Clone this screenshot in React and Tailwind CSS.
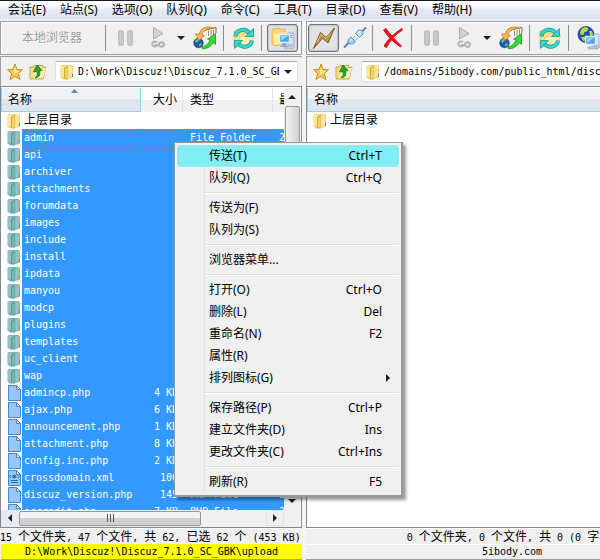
// App.jsx — dual-pane FTP client window with the local file context menu open
import { useState } from "react";

const FOLDERS = [
  "admin", "api", "archiver", "attachments", "forumdata", "images", "include", "install",
  "ipdata", "manyou", "modcp", "plugins", "templates", "uc_client", "wap",
];

const FILES = [
  { name: "admincp.php", size: "4 KB", type: "PHP File" },
  { name: "ajax.php", size: "6 KB", type: "PHP File" },
  { name: "announcement.php", size: "1 KB", type: "PHP File" },
  { name: "attachment.php", size: "8 KB", type: "PHP File" },
  { name: "config.inc.php", size: "2 KB", type: "PHP File" },
  { name: "crossdomain.xml", size: "106", type: "XML File" },
  { name: "discuz_version.php", size: "145", type: "PHP File" },
  { name: "eccredit.php", size: "7 KB", type: "PHP File" },
];

const MENUS = ["会话(E)", "站点(S)", "选项(O)", "队列(Q)", "命令(C)", "工具(T)", "目录(D)", "查看(V)", "帮助(H)"];

const CONTEXT_GROUPS = [
  [["传送(T)", "Ctrl+T"], ["队列(Q)", "Ctrl+Q"]],
  [["传送为(F)"], ["队列为(S)"]],
  [["浏览器菜单..."]],
  [["打开(O)", "Ctrl+O"], ["删除(L)", "Del"], ["重命名(N)", "F2"], ["属性(R)"], ["排列图标(G)", "sub"]],
  [["保存路径(P)", "Ctrl+P"], ["建立文件夹(D)", "Ins"], ["更改文件夹(C)", "Ctrl+Ins"]],
  [["刷新(R)", "F5"]],
];

/* Latin is set at 10px (6px advance), Chinese at 12px, like a bitmap song face */
function Song({ children }) {
  return children.split(/([\u4e00-\u9fff]+)/).map((part, i) =>
    i % 2 ? <span key={i} className="text-[12px]">{part}</span> : part
  );
}

/* ── Icons ── */
function FolderIcon({ selected }) {
  const c = selected
    ? ["#7fb3b4", "#5a96ab", "#94c2c2", "#4b94d8"]
    : ["#f0d270", "#d2a83c", "#f9e79c", "#4a90d0"];
  return (
    <svg className="block h-4 w-[14px] shrink-0" viewBox="0 0 14 16">
      <path d="M.5 2 2 1h9.500l1.500 1v11.500L7 15.500H3L.5 13.500z" fill={c[0]} />
      <path d="M1 2h4v10.500l-4 .5z" fill={c[2]} />
      <path d="M4 4 7.500 2v13.500L4 15z" fill={c[1]} />
      <path d="M5 5 7.500 3v11L5 15z" fill={c[0]} />
      <path d="M8.500 2 12 1.500V12l-3.500 2.500z" fill={c[2]} />
      <path d="M12 9.500h1V13h-1z" fill={c[3]} />
    </svg>
  );
}

function FileIcon({ xml }) {
  return (
    <svg className="block h-4 w-[14px] shrink-0" viewBox="0 0 14 16">
      <path d="M1.500.5h8l4 4v11h-12z" fill="#97c7f8" stroke="#4386cc" />
      <path d="M9.500.5v4h4z" fill="#e2f1ff" stroke="#4386cc" />
      {xml && (
        <g fill="none" stroke="#1d70b0">
          <path d="M4 5 2.500 6.500 4 8M10.500 5 12 6.500 10.500 8M4 10.500h7M4 12.500h7" />
          <circle cx="7.200" cy="6.500" r="1.500" fill="#1a84b0" />
        </g>
      )}
    </svg>
  );
}

function PauseIcon() {
  return (
    <svg className="h-[26px] w-6" viewBox="0 0 24 26">
      <g fill="#c3c5c7" stroke="#b9bbbd">
        <rect x="4.500" y="5.500" width="5" height="15" rx="2" />
        <rect x="13.500" y="5.500" width="5" height="15" rx="2" />
      </g>
      <path d="M6.500 8v10M15.500 8v10" stroke="#cfd1d3" />
    </svg>
  );
}

function GoIcon() {
  return (
    <svg className="h-[26px] w-6" viewBox="0 0 24 26">
      <path d="M7.500 2.500V14L17 8.500z" fill="#d0d3d7" stroke="#a9adb1" strokeLinejoin="round" />
      <g fill="none" stroke="#b0b3b6" strokeWidth="2">
        <path d="M11 17.300a2.800 2.400 0 1 0 .2 3.200V20H9" />
        <ellipse cx="15.500" cy="19.500" rx="2.400" ry="2.300" />
      </g>
    </svg>
  );
}

function TransferIcon() {
  return (
    <svg className="h-[26px] w-6" viewBox="0 0 24 26">
      <path d="M13 5.500 23 3v8l-8 1.500z" fill="#f7f5f0" />
      <path d="M15.500 5.500v5.500M18 5v6M20.500 4.500v6" stroke="#a9886c" />
      <path d="M12 5 23 2.500V8" fill="none" stroke="#8e6240" />
      <circle cx="5.500" cy="18" r="4.800" fill="#2056b8" stroke="#173e80" strokeWidth=".6" />
      <path d="M2 16c1-2 3-2.500 4-1.500l-1 2.500-2 1zM6 19l3-1-1 3-2 .500z" fill="#6cc24a" />
      <path d="M20 3C14 .5 7 3 6.500 9L2.500 9l3.500 6.500 5.500-5-2.500-.7C9.500 6.500 13 4 20 3z" fill="#fbb656" stroke="#c07828" strokeWidth=".8" strokeLinejoin="round" />
      <path d="M9 21.500c4 0 7-3 8-7l-2.500-.3L22.500 8.500v11l-2-2C18 21.500 13 24.500 9 23.500z" fill="#35d832" stroke="#189a1c" strokeWidth=".8" strokeLinejoin="round" />
    </svg>
  );
}

function RefreshIcon() {
  return (
    <svg className="h-[26px] w-6" viewBox="0 0 24 26">
      <path d="M2 6h6l1.500 2H17v12l-13 2H2z" fill="#fae17f" stroke="#e0bd5e" strokeWidth=".8" />
      <path d="M4 22 8 12l15-2-5 11z" fill="#fef3b0" stroke="#ebce74" strokeWidth=".8" />
      <g fill="none" stroke="#0f9c9c" strokeWidth="4">
        <path d="M3.500 11.500C4.500 4 13.500 3 17.500 8" />
        <path d="M20 15.500C19 22.500 10.500 23.500 6.500 19" />
      </g>
      <g fill="none" stroke="#3cd3cb" strokeWidth="2.600">
        <path d="M3.500 11.200C4.500 4 13.500 3 17.500 8" />
        <path d="M20 15.800C19 22.500 10.500 23.500 6.500 19" />
      </g>
      <path d="M21.500 3.500v8h-8zM2.500 23.500v-8h8z" fill="#3cd3cb" stroke="#0f9c9c" strokeWidth=".8" strokeLinejoin="round" />
    </svg>
  );
}

function LocalIcon() {
  return (
    <svg className="h-[26px] w-[26px]" viewBox="0 0 26 26">
      <path d="M2 4.500 9 3l2 1.500 4-.5v15L5 21l-3-2z" fill="#f7d774" stroke="#dcb04c" strokeWidth=".8" />
      <path d="M4 9 16 7l-1 11-11 2z" fill="#fceca5" />
      <path d="M18 8h6v12h-6z" fill="#d4e0f0" stroke="#8fa4c4" strokeWidth=".8" />
      <path d="M19.500 10.500h3M19.500 12.500h3" stroke="#8fa4c4" />
      <path d="M9.500 9.500h10v8h-10z" fill="#4aa6ec" stroke="#dcebfa" strokeWidth="1.400" />
      <path d="M10.500 10.500h8l-7 5z" fill="#97d4fa" />
      <path d="M12.500 18h4v2.500h2V22h-8v-1.500h2z" fill="#8fa6cf" />
      <path d="m14 22.500 7-2 4 1-2 2.500h-8z" fill="#c3d0e6" stroke="#95a8c8" strokeWidth=".6" />
    </svg>
  );
}

function BoltIcon() {
  return (
    <svg className="h-[26px] w-6" viewBox="0 0 24 26">
      <path d="m1.500 23.500 7-16 5.500 5L22.500 3 16 18l-5.500-4.800z" fill="#c1944c" stroke="#79551f" strokeLinejoin="round" />
      <path d="m4.500 18 4.500-9 5 4.500 5-6" fill="none" stroke="#dcb878" />
    </svg>
  );
}

function PlugIcon() {
  return (
    <svg className="h-[26px] w-6" viewBox="0 0 24 26">
      <path d="m1 22.500 5-5M18 7.500l5-5" stroke="#5b83a8" strokeWidth="2" />
      <path d="m5.500 18.500-.5-3.500 3-3 4.500 4.500-3 2.500z" fill="#9fd2f4" stroke="#4f8fc4" />
      <path d="m12.500 8.500 3-3.500 4 .5.500 3.500-3.500 3.500z" fill="#bfe1f8" stroke="#4f8fc4" />
      <path d="m10.500 13 2-2M12.500 15l2-2" stroke="#7597b4" />
      <path d="m7 15.500 1.500-1.500M15 8.500l2-2" stroke="#f0faff" strokeWidth="1.500" />
    </svg>
  );
}

function CrossIcon() {
  return (
    <svg className="h-[26px] w-6" viewBox="0 0 24 26">
      <path d="M2.500 5 5 3.500C9 9 14 15 20.500 21l-1 .8C13 18 7 12 2.500 5z" fill="#e0161b" stroke="#e0161b" strokeLinejoin="round" />
      <path d="M21 3.500C14 7.500 7 14.500 3 21l2.500 1.500C9 16 14.500 9 21.500 5z" fill="#e0161b" stroke="#e0161b" strokeLinejoin="round" />
    </svg>
  );
}

function GlobeIcon() {
  return (
    <svg className="h-[26px] w-6" viewBox="0 0 24 26">
      <circle cx="9" cy="9.500" r="8" fill="#1955b7" stroke="#143d84" strokeWidth=".8" />
      <path d="M4 4.500c3-3 6-2.500 7.500-1L10 6.500 7.500 7 6 10.500 3 9zM12 6h3l1 4-2.500 1.500zM4 12h4l1 3-3 1z" fill="#c6d735" />
      <path d="M17 9h5v12h-5z" fill="#d4e0f0" stroke="#8fa4c4" strokeWidth=".8" />
      <path d="M8.500 11.500h10v8h-10z" fill="#4aa6ec" stroke="#dcebfa" strokeWidth="1.400" />
      <path d="M9.500 12.500h8l-7 5z" fill="#97d4fa" />
      <path d="m10 22.500 8-2 5 1-2 2.500h-9z" fill="#b4c2dc" stroke="#8fa4c4" strokeWidth=".6" />
    </svg>
  );
}

function StarIcon() {
  return (
    <svg className="h-[18px] w-4" viewBox="0 0 16 18">
      <path d="m8 1 2 5.500 5.500.3-4.200 3.700 1.700 6L8 13.300 3 16.500l1.600-6L.5 6.800 6 6.500z" fill="#fac94d" stroke="#c98c25" strokeLinejoin="round" />
      <path d="m8 3.500 1 4 3.500.5-5.500 3z" fill="#fff0a8" />
    </svg>
  );
}

function UpFolderIcon() {
  return (
    <svg className="h-[18px] w-[18px]" viewBox="0 0 18 18">
      <path d="M1 4h3l1-1.500h9V5l3-1-3 12H1z" fill="#f6df7d" stroke="#b59a3c" strokeWidth=".8" />
      <path d="M5 15 6.500 7 17 5l-3 10z" fill="#fff4b5" />
      <path d="M6 14.500c3-1.500 2.500-4 1.500-6L4.500 9 8 2l5 5.500-2.500.5c1 4-.5 7-4.500 6.500z" fill="#27a436" stroke="#0f6f20" strokeWidth=".8" />
    </svg>
  );
}

function Caret({ dir = "down" }) {
  const d = { down: "M0 2h8L4 6z", up: "M4 2 8 6H0z", left: "M6 0v8L2 4z", right: "M2 0v8l4-4z" }[dir];
  return (
    <svg className="h-2 w-2 shrink-0" viewBox="0 0 8 8">
      <path d={d} fill="#202020" />
    </svg>
  );
}

/* ── Toolbar parts ── */
function Tool({ label, disabled, children }) {
  return (
    <button type="button" aria-label={label} disabled={disabled} className="grid w-6 shrink-0 place-items-center">
      {children}
    </button>
  );
}

function PressedTool({ label, children }) {
  return (
    <button
      type="button"
      aria-label={label}
      aria-pressed="true"
      className="grid h-7 w-[31px] shrink-0 place-items-center rounded-[3px] border border-[#6d7075] bg-[#dfe2e7] shadow-[inset_0_0_2px_#8a8d92]"
    >
      {children}
    </button>
  );
}

function Divider() {
  return <div className="h-[26px] w-px shrink-0 bg-[#8c8c8c]" />;
}

function QueueTools() {
  return (
    <>
      <Tool label="暂停" disabled><PauseIcon /></Tool>
      <div className="ml-2 flex items-center">
        <Tool label="开始" disabled><GoIcon /></Tool>
        <button type="button" aria-label="更多" className="ml-[7px] grid h-6 w-2 place-items-center"><Caret /></button>
      </div>
      <div className="ml-2 flex"><Tool label="传送"><TransferIcon /></Tool></div>
    </>
  );
}

function Toolbar({ children }) {
  return (
    <div className="flex h-[34px] items-center border border-[#9d9fa3] bg-[#f0f0f0] shadow-[inset_1px_1px_0_#fff]">
      {children}
    </div>
  );
}

function AddressBar({ id, label, path, combo }) {
  const [value, setValue] = useState(path);
  return (
    <div className="mt-px flex h-[30px] items-center border-t border-l border-[#9d9fa3] bg-[#f0f0f0] pr-1 pl-[6px]">
      <button type="button" aria-label="收藏"><StarIcon /></button>
      <button type="button" aria-label="上层目录" className="ml-[6px]"><UpFolderIcon /></button>
      <div className="ml-2 flex h-[21px] min-w-0 flex-1 items-center rounded-[2px] border border-[#dcdfe4] border-t-[#abadb3] bg-white pr-[5px] pl-1">
        <FolderIcon />
        <label htmlFor={id} className="sr-only">{label}</label>
        <input
          id={id}
          value={value}
          onChange={(e) => setValue(e.target.value)}
          className="ml-1 h-[18px] min-w-0 flex-1 bg-transparent text-[10px] leading-[18px] text-black outline-none"
        />
        {combo && <button type="button" aria-label="展开" className="ml-[5px] flex"><Caret /></button>}
      </div>
    </div>
  );
}

/* ── File list ── */
const HEAD = "h-6 border-r border-[#dfe3ea] bg-linear-to-b from-white from-50% to-[#f1f1f1] to-50% text-[12px] font-normal";
const SORTED = "relative h-6 border border-t-0 border-[#8fd3f0] bg-linear-to-b from-[#f0f2f4] from-50% to-[#dfe5ef] to-50% pl-[6px] text-left text-[12px] font-normal";

function FileRow({ name, size, type, date, focused, icon }) {
  const edge = focused ? "border-y border-dotted border-[#c87832] leading-[15px]" : "leading-[17px]";
  return (
    <tr className="h-[17px] text-white">
      <td className="p-0">
        <div className="flex h-[17px] items-center pl-[6px]">
          {icon}
          <span className={`ml-px h-[17px] flex-1 bg-[#3399ff] pl-[2px] ${edge}`}>{name}</span>
        </div>
      </td>
      <td className="bg-[#3399ff] p-0"><div className={`h-[17px] pr-[5px] text-right ${edge}`}>{size}</div></td>
      <td className="bg-[#3399ff] p-0"><div className={`h-[17px] pl-[7px] ${edge}`}>{type}</div></td>
      <td className="bg-[#3399ff] p-0"><div className={`h-[17px] pl-[6px] ${edge}`}>{date}</div></td>
    </tr>
  );
}

function ParentRow({ span }) {
  return (
    <tr className="h-[17px]">
      <td colSpan={span} className="p-0">
        <div className="flex h-[17px] items-center pl-[6px] text-[12px] leading-[17px]">
          <FolderIcon />
          <span className="ml-[3px]">上层目录</span>
        </div>
      </td>
    </tr>
  );
}

function LocalList() {
  return (
    <div className="flex min-h-0 flex-1 flex-col border border-[#828790] bg-white pt-px pr-px">
      <div className="flex min-h-0 flex-1">
        <div className="min-w-0 flex-1 overflow-hidden">
          <table className="w-[380px] table-fixed border-separate border-spacing-0">
            <colgroup>
              <col className="w-[140px]" />
              <col className="w-[42px]" />
              <col className="w-[90px]" />
              <col />
            </colgroup>
            <thead>
              <tr>
                <th className={SORTED}>
                  名称
                  <svg className="absolute top-px left-1/2 h-1 w-[7px]" viewBox="0 0 7 4">
                    <path d="M0 4 3.500 0 7 4z" fill="#5f8fae" />
                  </svg>
                </th>
                <th className={`${HEAD} pr-[5px] text-right`}>大小</th>
                <th className={`${HEAD} pl-[7px] text-left`}>类型</th>
                <th className={`${HEAD} pl-[6px] text-left`}>最后修改</th>
              </tr>
            </thead>
            <tbody>
              <ParentRow span={4} />
              {FOLDERS.map((name, i) => (
                <FileRow key={name} name={name} type="File Folder" date="2009-11" focused={i === 0} icon={<FolderIcon selected />} />
              ))}
              {FILES.map((f) => (
                <FileRow key={f.name} {...f} date="2009-11" icon={<FileIcon xml={f.type === "XML File"} />} />
              ))}
            </tbody>
          </table>
        </div>

        {/* Vertical scrollbar */}
        <div className="flex w-4 shrink-0 flex-col items-center bg-[#f0f0f0]">
          <button type="button" aria-label="向上" className="grid h-[18px] w-4 place-items-center"><Caret dir="up" /></button>
          <div className="w-[15px] flex-1 rounded-[2px] border border-[#979797] bg-linear-to-r from-[#f4f4f4] to-[#cfd0d4]" />
          <button type="button" aria-label="向下" className="grid h-[18px] w-4 place-items-center"><Caret /></button>
        </div>
      </div>

      {/* Horizontal scrollbar */}
      <div className="flex h-4 shrink-0 items-center bg-[#f0f0f0] pr-4">
        <button type="button" aria-label="向左" className="grid h-4 w-[18px] place-items-center bg-[#e6e9f0]"><Caret dir="left" /></button>
        <div className="flex h-[15px] w-[182px] items-center justify-center gap-[2px] rounded-[2px] border border-[#979797] bg-linear-to-b from-[#f2f2f2] from-50% to-[#cfd0d4] to-50%">
          <i className="h-2 w-px bg-[#555]" />
          <i className="h-2 w-px bg-[#555]" />
          <i className="h-2 w-px bg-[#555]" />
        </div>
        <div className="flex-1" />
        <button type="button" aria-label="向右" className="grid h-4 w-[18px] place-items-center border border-[#dfe5ef]"><Caret dir="right" /></button>
      </div>
      <div className="h-px shrink-0 bg-[#f0f0f0]" />
    </div>
  );
}

function RemoteList() {
  return (
    <div className="min-h-0 flex-1 overflow-hidden border border-[#828790] bg-white pt-px">
      <table className="w-full table-fixed border-separate border-spacing-0">
        <thead>
          <tr><th className={SORTED}>名称</th></tr>
        </thead>
        <tbody>
          <ParentRow span={1} />
        </tbody>
      </table>
    </div>
  );
}

/* ── Context menu ── */
function ContextMenu() {
  return (
    <div
      role="menu"
      className="absolute top-[142px] left-[174px] w-[229px] border border-r-2 border-b-2 border-[#979797] bg-[#f0f0f0] p-[2px] font-['Noto_Sans','Noto_Sans_CJK_SC',sans-serif] text-[12px] shadow-[3px_3px_3px_rgba(0,0,0,0.4)]"
    >
      {CONTEXT_GROUPS.map((group, g) => (
        <div key={g}>
          {g > 0 && (
            <div className="ml-[27px] flex h-2 items-center border-l border-[#e2e3e3]">
              <div className="h-[2px] flex-1 border-t border-[#dde2ec] bg-white" />
            </div>
          )}
          {group.map(([label, key], i) => {
            const active = g === 0 && i === 0;
            return (
              <button
                key={label}
                type="button"
                role="menuitem"
                className={`flex h-[22px] w-full items-center rounded-[3px] ${active ? "border border-[#a5e3ee] bg-[#80eef2]" : "border border-transparent"}`}
              >
                <span className={`ml-[26px] flex h-[22px] flex-1 items-center border-l pl-1 ${active ? "border-transparent" : "border-[#e2e3e3]"}`}>
                  {label}
                </span>
                {key === "sub" ? <span className="mr-[6px] flex"><Caret dir="right" /></span> : <span className="mr-4">{key}</span>}
              </button>
            );
          })}
        </div>
      ))}
    </div>
  );
}

export default function App() {
  return (
    <div className="relative flex h-screen flex-col overflow-hidden bg-[#f0f0f0] font-['DejaVu_Sans_Mono','Noto_Sans_CJK_SC',monospace] text-[10px] whitespace-nowrap text-black">
      {/* Menu bar */}
      <nav className="flex h-[21px] shrink-0 items-center gap-[14px] border-t border-b-2 border-t-[#14182a] border-b-[#f0f0f0] bg-linear-to-b from-white from-20% via-[#e6eaf3] via-50% to-[#dbe2ef] pl-2 font-['Noto_Sans','Noto_Sans_CJK_SC',sans-serif] text-[12px] leading-[18px]">
        {MENUS.map((m) => (
          <button key={m} type="button">{m}</button>
        ))}
      </nav>

      <div className="flex min-h-0 flex-1">
        {/* Local pane */}
        <section className="flex w-[302px] shrink-0 flex-col">
          <Toolbar>
            <span className="ml-[21px] w-[83px] shrink-0 text-[12px] text-[#9b9b9b] [text-shadow:1px_1px_0_#fff]">本地浏览器</span>
            <Divider />
            <div className="ml-2 flex items-center"><QueueTools /></div>
            <div className="ml-[6px] flex items-center gap-2">
              <Divider />
              <Tool label="刷新"><RefreshIcon /></Tool>
            </div>
            <div className="ml-[5px] flex items-center gap-[5px]">
              <Divider />
              <PressedTool label="本地"><LocalIcon /></PressedTool>
            </div>
          </Toolbar>
          <AddressBar id="local-path" label="本地路径" path="D:\Work\Discuz!\Discuz_7.1.0_SC_GBK\upload" combo />
          <LocalList />
          <div className="h-4 shrink-0 overflow-hidden border-t border-white leading-[16px]">
            <Song>15 个文件夹, 47 个文件, 共 62, 已选 62 个 (453 KB)</Song>
          </div>
          <div className="ml-px h-4 shrink-0 border-b border-[#9d9fa3] bg-[#ffff00] text-center leading-[15px]">
            D:\Work\Discuz!\Discuz_7.1.0_SC_GBK\upload
          </div>
        </section>

        <div className="w-1 shrink-0 bg-[#f5f5f5]" />

        {/* Remote pane, runs past the window's right edge */}
        <section className="flex min-w-[412px] flex-1 flex-col">
          <Toolbar>
            <div className="ml-px flex items-center gap-1">
              <PressedTool label="连接"><BoltIcon /></PressedTool>
              <Tool label="断开"><PlugIcon /></Tool>
            </div>
            <div className="ml-[5px] flex items-center gap-2">
              <Divider />
              <Tool label="中止"><CrossIcon /></Tool>
            </div>
            <div className="ml-[6px] flex items-center gap-2">
              <Divider />
              <div className="flex items-center"><QueueTools /></div>
            </div>
            <div className="ml-[6px] flex items-center gap-2">
              <Divider />
              <Tool label="刷新"><RefreshIcon /></Tool>
            </div>
            <div className="ml-[6px] flex items-center gap-2">
              <Divider />
              <Tool label="远程"><GlobeIcon /></Tool>
            </div>
          </Toolbar>
          <AddressBar id="remote-path" label="远程路径" path="/domains/5ibody.com/public_html/discuz" />
          <RemoteList />
          <div className="h-4 shrink-0 overflow-hidden border-t border-white text-center leading-[16px]">
            <Song>0 个文件夹, 0 个文件, 共 0 (0 字节)</Song>
          </div>
          <div className="h-4 shrink-0 border-t border-b border-t-white border-b-[#9d9fa3] text-center leading-[14px]">5ibody.com</div>
        </section>
      </div>

      <ContextMenu />
    </div>
  );
}
